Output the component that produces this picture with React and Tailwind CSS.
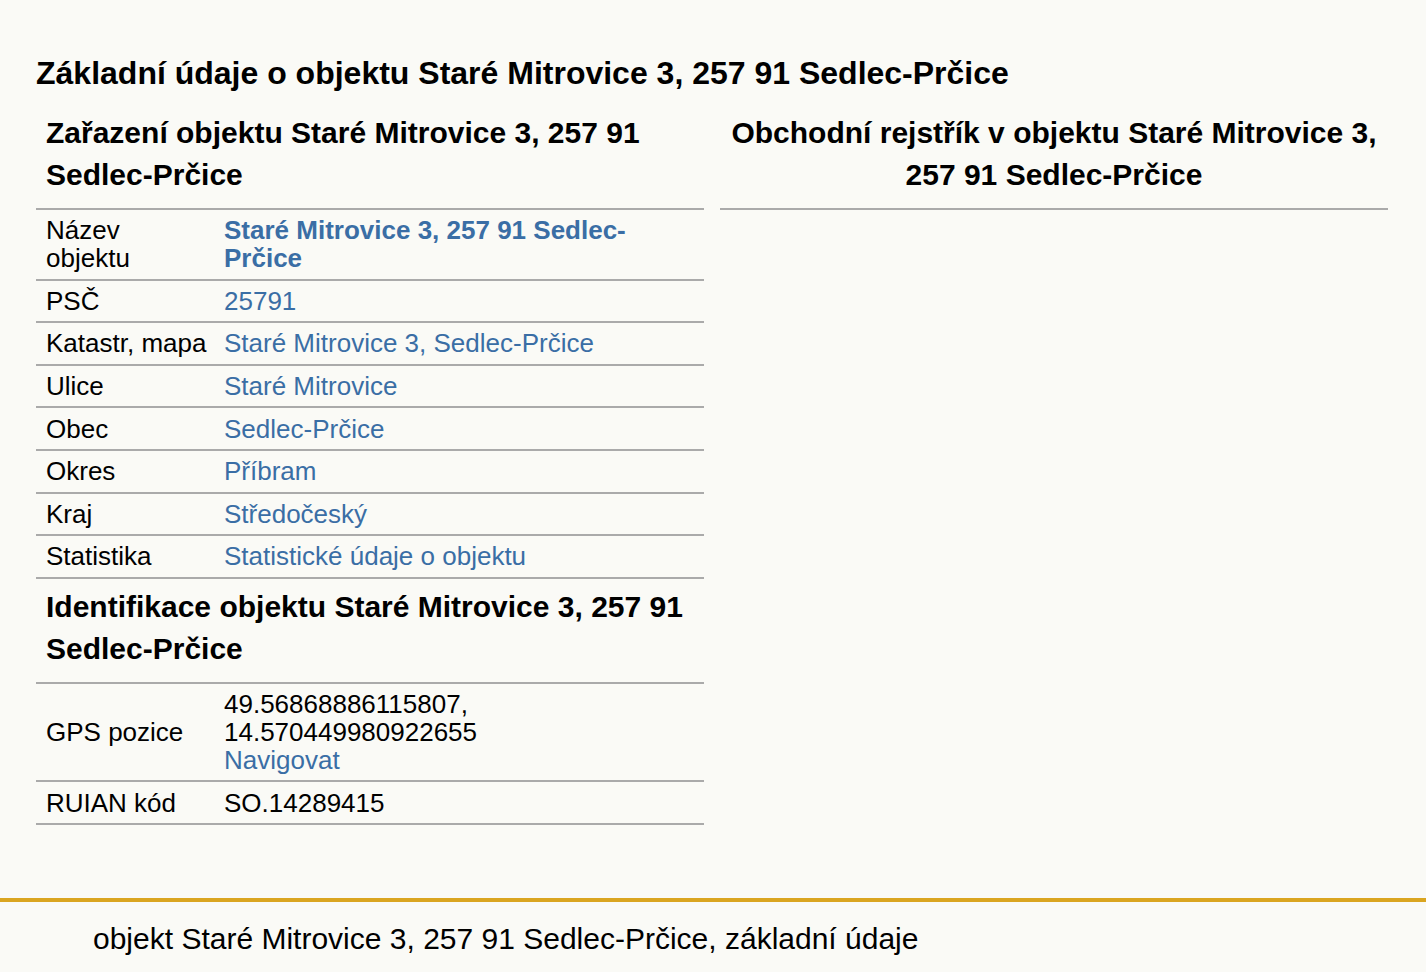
import React from "react";

const rows = [
  { label: "Název\nobjektu", value: "Staré Mitrovice 3, 257 91 Sedlec-Prčice", bold: true },
  { label: "PSČ", value: "25791" },
  { label: "Katastr, mapa", value: "Staré Mitrovice 3, Sedlec-Prčice" },
  { label: "Ulice", value: "Staré Mitrovice" },
  { label: "Obec", value: "Sedlec-Prčice" },
  { label: "Okres", value: "Příbram" },
  { label: "Kraj", value: "Středočeský" },
  { label: "Statistika", value: "Statistické údaje o objektu" },
];

const Row = ({ label, children }) => (
  <div className="flex items-center border-b-2 border-[#aaaaaa] py-[6.3px] leading-[28px]">
    <div className="w-[188px] shrink-0 pl-[10px] whitespace-pre">{label}</div>
    <div className="flex-1 pr-[10px]">{children}</div>
  </div>
);

const App = () => {
  return (
    <div
      className="min-h-screen bg-[#fafaf6] text-black"
      style={{ fontFamily: '"Liberation Sans", Arial, sans-serif' }}
    >
      <main className="px-[36px] pt-[51px]">
        <h1 className="text-[32px] font-bold leading-[45px]">
          Základní údaje o objektu Staré Mitrovice 3, 257 91 Sedlec-Prčice
        </h1>
        <div className="mt-[9px] flex gap-[16px] w-[1352px]">
          <section className="w-[668px] text-[26px]">
            <h2 className="text-[30px] font-bold leading-[42px] px-[10px] pt-[7px] pb-[12px] border-b-2 border-[#aaaaaa]">
              Zařazení objektu Staré Mitrovice 3, 257 91 Sedlec-Prčice
            </h2>
            {rows.map((r) => (
              <Row key={r.label} label={r.label}>
                <a
                  href="#"
                  className={`text-[#3a6ea5] ${r.bold ? "font-bold" : ""}`}
                >
                  {r.value}
                </a>
              </Row>
            ))}
            <h2 className="text-[30px] font-bold leading-[42px] px-[10px] pt-[7px] pb-[12px] border-b-2 border-[#aaaaaa]">
              Identifikace objektu Staré Mitrovice 3, 257 91 Sedlec-Prčice
            </h2>
            <Row label="GPS pozice">
              <div>49.56868886115807,</div>
              <div>14.570449980922655</div>
              <a href="#" className="text-[#3a6ea5]">
                Navigovat
              </a>
            </Row>
            <Row label="RUIAN kód">SO.14289415</Row>
          </section>
          <section className="w-[668px]">
            <h2 className="text-[30px] font-bold leading-[42px] text-center px-[10px] pt-[7px] pb-[12px] border-b-2 border-[#aaaaaa]">
              Obchodní rejstřík v objektu Staré Mitrovice 3, 257 91 Sedlec-Prčice
            </h2>
          </section>
        </div>
      </main>
      <footer className="mt-[73px] border-t-4 border-[#daa520] pl-[93px] pt-[20px] pb-[16px] text-[30px] leading-[34px]">
        objekt Staré Mitrovice 3, 257 91 Sedlec-Prčice, základní údaje
      </footer>
    </div>
  );
};

export default App;
